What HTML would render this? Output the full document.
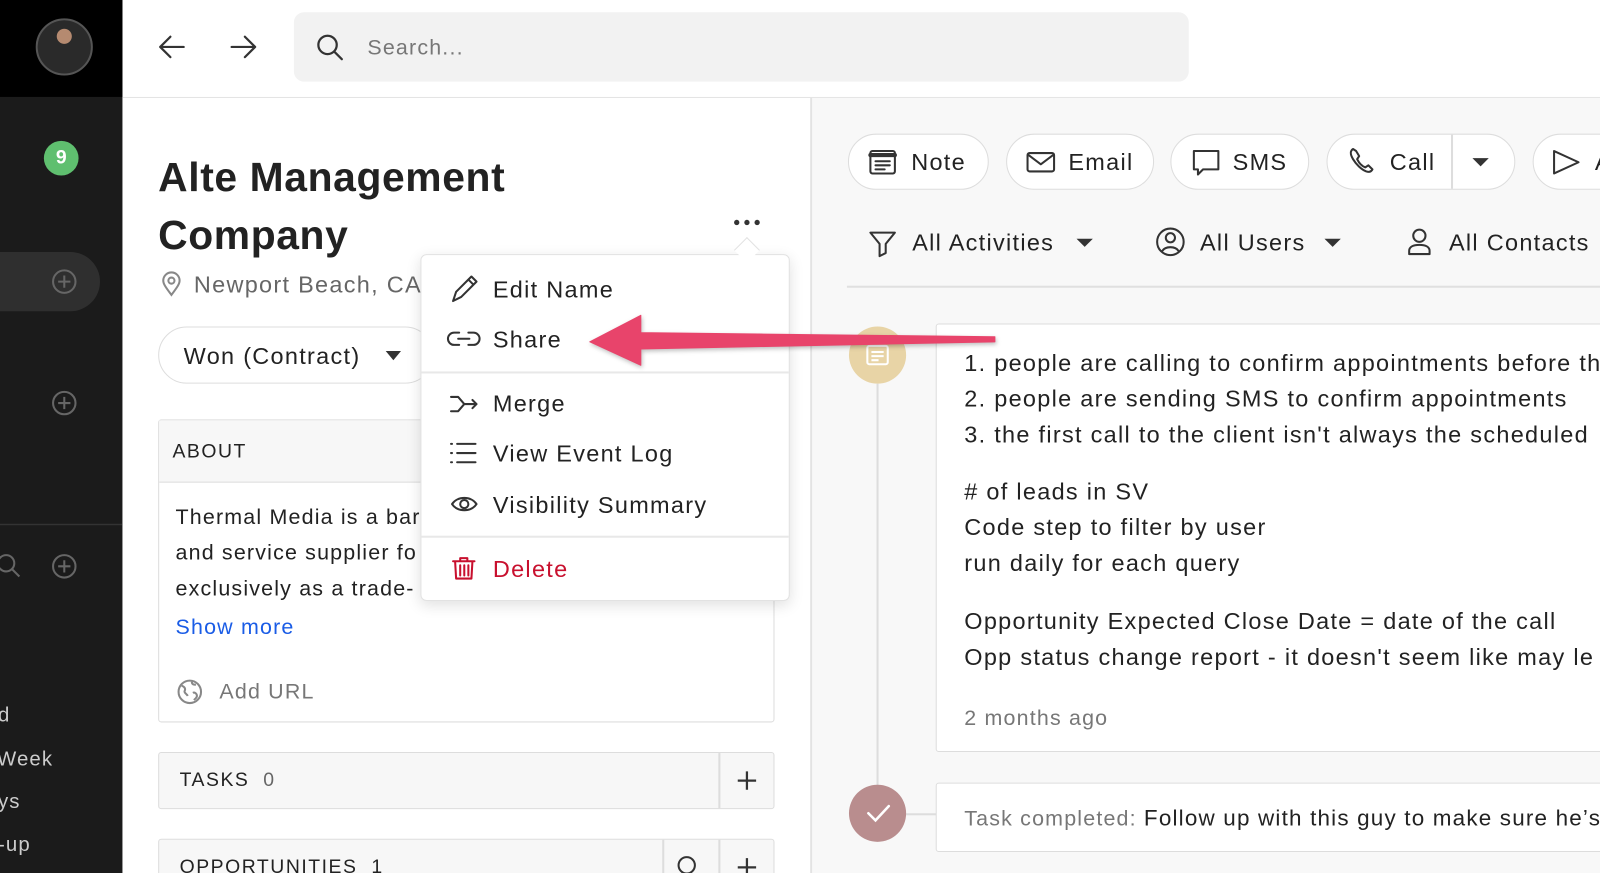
<!DOCTYPE html>
<html><head><style>
*{box-sizing:border-box;margin:0;padding:0}
body{width:1600px;height:873px;overflow:hidden;background:#fff;font-family:"Liberation Sans",sans-serif;color:#222}
#w{position:absolute;left:0;top:0;width:1568px;height:856px;transform:scale(1.0204);transform-origin:0 0;overflow:hidden}
.a{position:absolute}
.t{position:absolute;white-space:nowrap;line-height:1;transform:translateY(-50%);letter-spacing:0.055em}
svg{position:absolute;overflow:visible}
.pill{position:absolute;background:#fff;border:1.5px solid #ddd;border-radius:28px}
</style></head><body><div id="w">
<!-- sidebar -->
<div class="a" style="left:0;top:0;width:120px;height:856px;background:#1b1b1b"></div>
<div class="a" style="left:0;top:0;width:120px;height:95px;background:#000"></div>
<div class="a" style="left:35px;top:18px;width:56px;height:56px;border-radius:50%;background:radial-gradient(circle at 50% 30%,#b58a70 0 16%,#2a2a2a 17% 100%);border:2px solid #555"></div>
<div class="a" style="left:43px;top:138px;width:34px;height:34px;border-radius:50%;background:#5fbf6f;color:#fff;font-weight:bold;font-size:19px;text-align:center;line-height:34px">9</div>
<div class="a" style="left:0;top:247px;width:98px;height:58px;border-radius:0 29px 29px 0;background:#2f2f2f"></div>
<svg style="left:0;top:0" width="120" height="856" fill="none" stroke="#666" stroke-width="2">
<circle cx="63" cy="276" r="11"/><path d="M63 270v12M57 276h12"/>
<circle cx="63" cy="395" r="11"/><path d="M63 389v12M57 395h12"/>
<circle cx="63" cy="555" r="11"/><path d="M63 549v12M57 555h12"/>
<circle cx="6" cy="552" r="8"/><path d="M12 558l7 7"/>
<path d="M0 514h120" stroke="#333" stroke-width="1.5"/>
</svg>
<div class="t" style="left:-2px;top:701px;color:#ccc;font-size:20px">d</div>
<div class="t" style="left:-3px;top:744px;color:#ccc;font-size:20px">Week</div>
<div class="t" style="left:-2px;top:786px;color:#ccc;font-size:20px">ys</div>
<div class="t" style="left:-2px;top:828px;color:#ccc;font-size:20px">-up</div>
<!-- top bar -->
<div class="a" style="left:120px;top:95px;width:1448px;height:1px;background:#e3e3e3"></div>
<svg style="left:0;top:0" width="300" height="95" fill="none" stroke="#333" stroke-width="2.2" stroke-linecap="round" stroke-linejoin="round">
<path d="M180 46h-23M167 36l-10 10 10 10"/><path d="M227 46h23M240 36l10 10-10 10"/>
</svg>
<div class="a" style="left:288px;top:12px;width:877px;height:68px;background:#f2f2f2;border-radius:10px"></div>
<svg style="left:310px;top:33px" width="30" height="30" fill="none" stroke="#333" stroke-width="2.2"><circle cx="11" cy="11" r="9"/><path d="M18 18l7 7" stroke-linecap="round"/></svg>
<div class="t" style="left:360px;top:47px;font-size:21px;color:#777">Search...</div>
<!-- left content -->
<div class="a" style="left:794px;top:96px;width:1.5px;height:760px;background:#e3e3e3"></div>
<div class="t" style="left:155px;top:174px;font-size:40px;font-weight:bold;color:#222;letter-spacing:0.6px">Alte Management</div>
<div class="t" style="left:155px;top:231px;font-size:40px;font-weight:bold;color:#222;letter-spacing:0.6px">Company</div>
<svg style="left:159px;top:266px" width="20" height="26" fill="none" stroke="#888" stroke-width="2"><path d="M9 23C3 15 1 12 1 9a8 8 0 0116 0c0 3-2 6-8 14z"/><circle cx="9" cy="9" r="3"/></svg>
<div class="t" style="left:190px;top:279px;font-size:23px;color:#666">Newport Beach, CA</div>
<div class="pill" style="left:155px;top:320px;width:270px;height:56px"></div>
<div class="t" style="left:180px;top:349px;font-size:23px;color:#222">Won (Contract)</div>
<svg style="left:378px;top:344px" width="16" height="10"><path d="M0 0h15l-7.5 9z" fill="#333"/></svg>
<div class="a" style="left:155px;top:411px;width:604px;height:297px;border:1.5px solid #ddd;border-radius:3px"></div>
<div class="a" style="left:156px;top:412px;width:602px;height:61px;background:#f7f7f7;border-bottom:1.5px solid #ddd"></div>
<div class="t" style="left:169px;top:443px;font-size:19px;letter-spacing:1.5px;color:#222">ABOUT</div>
<div class="t" style="left:172px;top:507px;font-size:21px;color:#222">Thermal Media is a bar</div>
<div class="t" style="left:172px;top:542px;font-size:21px;color:#222">and service supplier fo</div>
<div class="t" style="left:172px;top:577px;font-size:21px;color:#222">exclusively as a trade-</div>
<div class="t" style="left:172px;top:615px;font-size:21px;color:#1a5ce6">Show more</div>
<svg style="left:174px;top:666px" width="24" height="24" fill="none" stroke="#888" stroke-width="2"><circle cx="12" cy="12" r="11"/><path d="M4 6c3 1 4 3 3 5s2 3 3 5M14 2c0 3 2 3 4 3M15 13c2-1 4 1 4 3s-2 3-3 4" /></svg>
<div class="t" style="left:215px;top:678px;font-size:21px;color:#777">Add URL</div>
<div class="a" style="left:155px;top:737px;width:604px;height:56px;border:1.5px solid #ddd;background:#f7f7f7;border-radius:3px"></div>
<div class="a" style="left:704px;top:738px;width:1.5px;height:54px;background:#ddd"></div>
<div class="t" style="left:176px;top:765px;font-size:19px;letter-spacing:1.5px">TASKS &nbsp;<span style="color:#666">0</span></div>
<svg style="left:722px;top:755px" width="20" height="20" stroke="#333" stroke-width="2.2"><path d="M10 1v18M1 10h18"/></svg>
<div class="a" style="left:155px;top:822px;width:604px;height:60px;border:1.5px solid #ddd;background:#f7f7f7;border-radius:3px"></div>
<div class="a" style="left:649px;top:823px;width:1.5px;height:40px;background:#ddd"></div>
<div class="a" style="left:704px;top:823px;width:1.5px;height:40px;background:#ddd"></div>
<div class="t" style="left:176px;top:850px;font-size:19px;letter-spacing:1.5px">OPPORTUNITIES &nbsp;1</div>
<svg style="left:663px;top:838px" width="22" height="22" fill="none" stroke="#333" stroke-width="2"><circle cx="10" cy="10" r="8"/></svg>
<svg style="left:722px;top:840px" width="20" height="20" stroke="#333" stroke-width="2.2"><path d="M10 1v18M1 10h18"/></svg>
<svg style="left:719px;top:213px" width="28" height="10" fill="#333"><circle cx="3" cy="5" r="2.6"/><circle cx="13" cy="5" r="2.6"/><circle cx="23" cy="5" r="2.6"/></svg>
<!-- right panel -->
<div class="a" style="left:796px;top:96px;width:772px;height:760px;background:#f8f8f8"></div>
<div class="pill" style="left:831px;top:131px;width:138px;height:55px"></div>
<div class="pill" style="left:986px;top:131px;width:145px;height:55px"></div>
<div class="pill" style="left:1147px;top:131px;width:136px;height:55px"></div>
<div class="pill" style="left:1300px;top:131px;width:185px;height:55px"></div>
<div class="a" style="left:1422px;top:132px;width:1.5px;height:53px;background:#ddd"></div>
<div class="pill" style="left:1502px;top:131px;width:120px;height:55px"></div>
<svg style="left:0;top:0" width="1568" height="856" fill="none" stroke="#333" stroke-width="2" stroke-linejoin="round" stroke-linecap="round">
<rect x="853" y="148" width="24" height="22" rx="2"/><path d="M853 152h24" stroke-width="4"/><path d="M858 158h14M858 162h14M858 166h9"/>
<rect x="1007" y="150" width="26" height="18" rx="2"/><path d="M1008 152l12 9 12-9"/>
<path d="M1170 148h24v18h-15l-5 5v-5h-4z"/>
<path d="M1326 146c-3 2-3 5 0 10s8 10 13 12c3 1 5 0 6-2l-4-4-3 2c-3-1-6-4-8-8l2-3-3-5z"/>
<path d="M1523 148v22l24-11z"/>
<path d="M853 228h24l-9 11v9l-6 3v-12z"/>
<circle cx="1147" cy="237" r="13"/><circle cx="1147" cy="233" r="4.5"/><path d="M1139 246c3-5 13-5 16 0"/>
<circle cx="1391" cy="231" r="6"/><path d="M1381 249v-3c0-4 4-6 10-6s10 2 10 6v3z"/>
</svg>
<svg style="left:0;top:0" width="1568" height="856" fill="#333"><path d="M1443 155h16l-8 8z"/><path d="M1055 234h16l-8 8z"/><path d="M1298 234h16l-8 8z"/></svg>
<div class="t" style="left:893px;top:159px;font-size:23px">Note</div>
<div class="t" style="left:1047px;top:159px;font-size:23px">Email</div>
<div class="t" style="left:1208px;top:159px;font-size:23px">SMS</div>
<div class="t" style="left:1362px;top:159px;font-size:23px">Call</div>
<div class="t" style="left:1563px;top:159px;font-size:23px">A</div>
<div class="t" style="left:894px;top:238px;font-size:23px">All Activities</div>
<div class="t" style="left:1176px;top:238px;font-size:23px">All Users</div>
<div class="t" style="left:1420px;top:238px;font-size:23px">All Contacts</div>
<div class="a" style="left:830px;top:280px;width:738px;height:1.5px;background:#e0e0e0"></div>
<div class="a" style="left:859px;top:376px;width:2px;height:400px;background:#ddd"></div>
<div class="a" style="left:832px;top:320px;width:56px;height:56px;border-radius:50%;background:#e8d4a6"></div>
<svg style="left:849px;top:338px" width="22" height="20" fill="none" stroke="#fff" stroke-width="2"><rect x="1" y="1" width="20" height="18" rx="2"/><path d="M5 7h12M5 11h12M5 15h7"/></svg>
<div class="a" style="left:917px;top:317px;width:680px;height:420px;background:#fff;border:1.5px solid #ddd;border-radius:3px"></div>
<div class="t" style="left:945px;top:356px;font-size:23px">1. people are calling to confirm appointments before th</div>
<div class="t" style="left:945px;top:391px;font-size:23px">2. people are sending SMS to confirm appointments</div>
<div class="t" style="left:945px;top:426px;font-size:23px">3. the first call to the client isn't always the scheduled</div>
<div class="t" style="left:945px;top:482px;font-size:23px"># of leads in SV</div>
<div class="t" style="left:945px;top:517px;font-size:23px">Code step to filter by user</div>
<div class="t" style="left:945px;top:552px;font-size:23px">run daily for each query</div>
<div class="t" style="left:945px;top:609px;font-size:23px">Opportunity Expected Close Date = date of the call</div>
<div class="t" style="left:945px;top:644px;font-size:23px">Opp status change report - it doesn't seem like may le</div>
<div class="t" style="left:945px;top:704px;font-size:21px;color:#777">2 months ago</div>
<div class="a" style="left:888px;top:797px;width:30px;height:1.5px;background:#ddd"></div>
<div class="a" style="left:832px;top:769px;width:56px;height:56px;border-radius:50%;background:#b98d8e"></div>
<svg style="left:849px;top:788px" width="24" height="18" fill="none" stroke="#fff" stroke-width="2.5" stroke-linecap="round"><path d="M2 9l7 7 13-14"/></svg>
<div class="a" style="left:917px;top:767px;width:680px;height:68px;background:#fff;border:1.5px solid #ddd;border-radius:3px"></div>
<div class="t" style="left:945px;top:802px;font-size:21px;color:#777">Task completed: <span style="color:#222;font-size:22px">Follow up with this guy to make sure he’s</span></div>
<!-- menu -->
<div class="a" style="left:412px;top:249px;width:362px;height:340px;background:#fff;border:1px solid #e2e2e2;border-radius:6px;box-shadow:0 4px 14px rgba(0,0,0,.12)"></div>
<div class="a" style="left:723px;top:236px;width:18px;height:18px;background:#fff;border-left:1px solid #e2e2e2;border-top:1px solid #e2e2e2;transform:rotate(45deg)"></div>
<div class="a" style="left:413px;top:364px;width:360px;height:2px;background:#e8e8e8"></div>
<div class="a" style="left:413px;top:525px;width:360px;height:2px;background:#e8e8e8"></div>
<svg style="left:0;top:0" width="800" height="600" fill="none" stroke="#333" stroke-width="2" stroke-linecap="round" stroke-linejoin="round">
<path d="M444 295l3-9 15-15 5 5-15 15zM459 274l5 5"/>
<path d="M450 326h-5a6 6 0 000 12h5M459 326h5a6 6 0 010 12h-5M449 332h11"/>
<path d="M442 389h7l6 7-6 7h-7M455 396h12M463 392l4 4-4 4"/>
<path d="M442 435h1M448 435h18M442 444h1M448 444h18M442 453h1M448 453h18"/>
<path d="M443 494c5-8 19-8 24 0-5 8-19 8-24 0z"/><circle cx="455" cy="494" r="4"/>
<g stroke="#c8102e"><path d="M444 550h21M451 550v-3h7v3M446 550l1 17h15l1-17M451 554v10M455 554v10M459 554v10"/></g>
</svg>
<div class="t" style="left:483px;top:284px;font-size:23px">Edit Name</div>
<div class="t" style="left:483px;top:333px;font-size:23px">Share</div>
<div class="t" style="left:483px;top:396px;font-size:23px">Merge</div>
<div class="t" style="left:483px;top:445px;font-size:23px">View Event Log</div>
<div class="t" style="left:483px;top:495px;font-size:23px">Visibility Summary</div>
<div class="t" style="left:483px;top:558px;font-size:23px;color:#c8102e">Delete</div>
<!-- arrow -->
<svg style="left:0;top:0" width="1000" height="600"><path d="M975 330L628 326L628 309L578 335L628 358L628 342L975 335z" fill="#e8446b" stroke="#e8446b" stroke-width="1" stroke-linejoin="round" style="filter:drop-shadow(1px 2px 2px rgba(0,0,0,.25))"/></svg>
</div></body></html>
